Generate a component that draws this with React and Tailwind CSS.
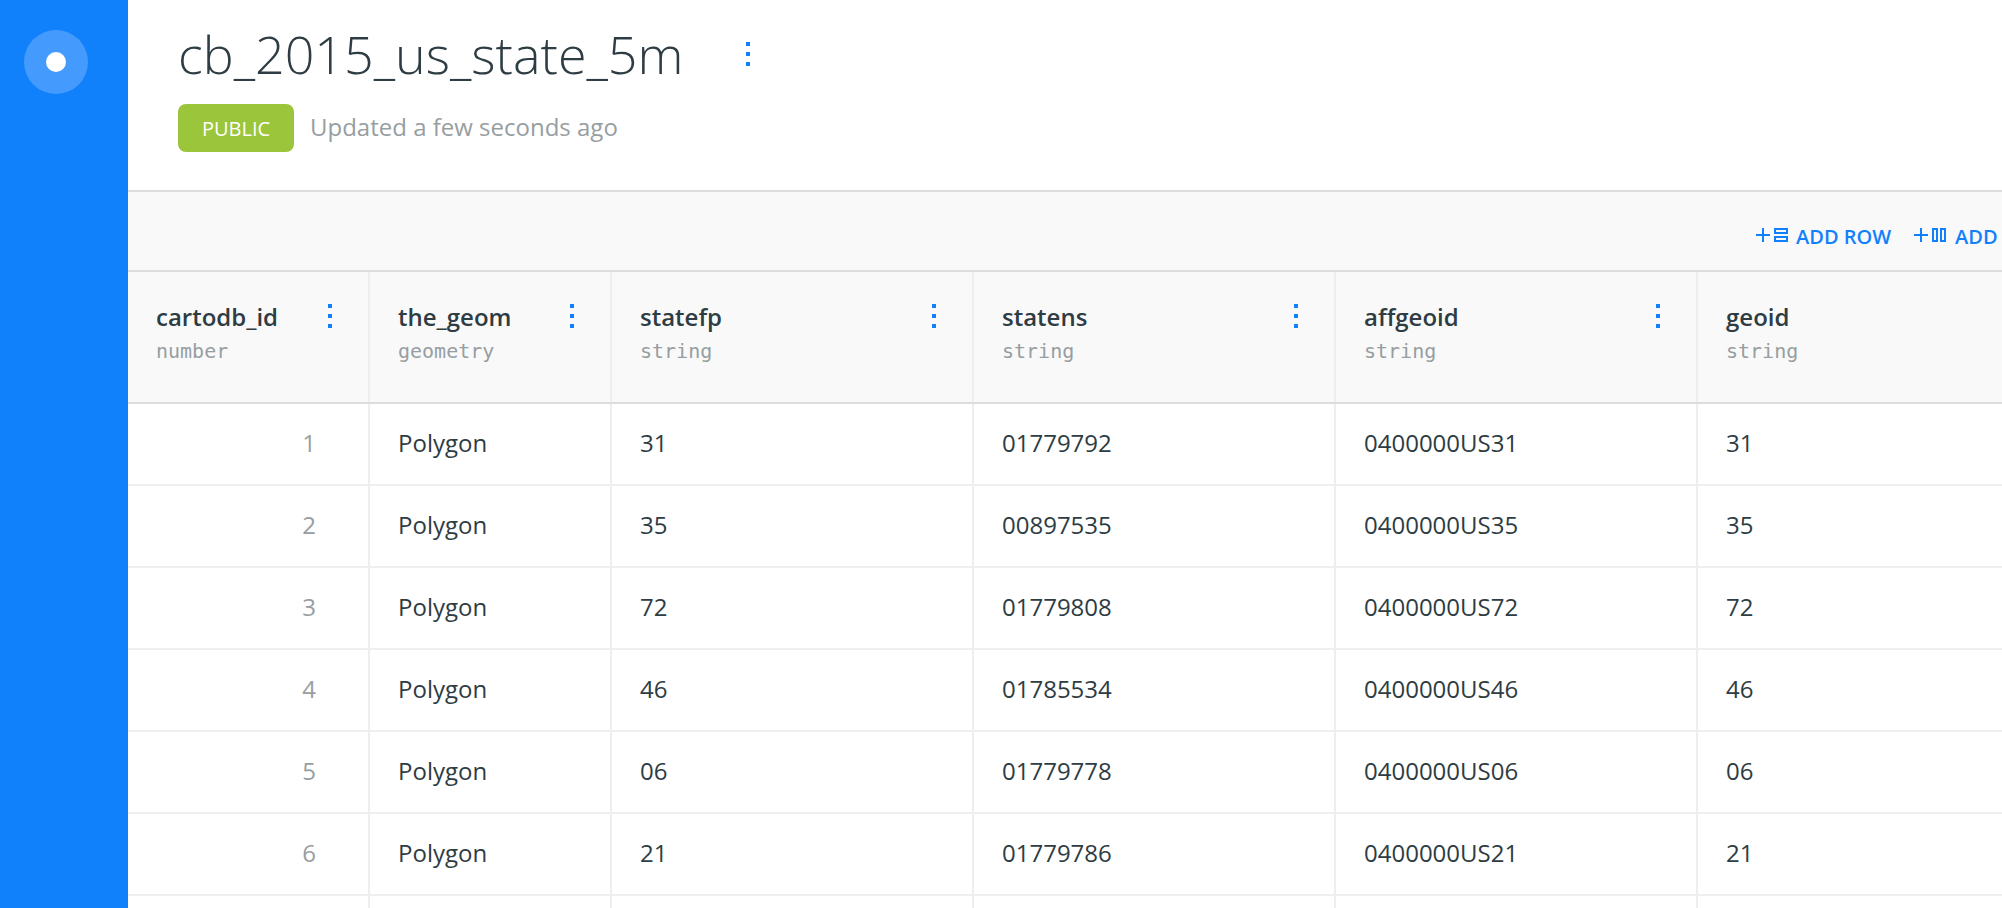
const columns = [
  { name: "cartodb_id", type: "number", menu: true },
  { name: "the_geom", type: "geometry", menu: true },
  { name: "statefp", type: "string", menu: true },
  { name: "statens", type: "string", menu: true },
  { name: "affgeoid", type: "string", menu: true },
  { name: "geoid", type: "string", menu: false },
];

const rows = [
  ["1", "Polygon", "31", "01779792", "0400000US31", "31"],
  ["2", "Polygon", "35", "00897535", "0400000US35", "35"],
  ["3", "Polygon", "72", "01779808", "0400000US72", "72"],
  ["4", "Polygon", "46", "01785534", "0400000US46", "46"],
  ["5", "Polygon", "06", "01779778", "0400000US06", "06"],
  ["6", "Polygon", "21", "01779786", "0400000US21", "21"],
  ["", "", "", "", "", ""],
];

const grid = "grid w-[1932px] shrink-0 grid-cols-[242px_242px_362px_362px_362px_362px]";

function Dots() {
  return (
    <span className="flex flex-col gap-1.5">
      <span className="size-1 bg-[#1181fb]" />
      <span className="size-1 bg-[#1181fb]" />
      <span className="size-1 bg-[#1181fb]" />
    </span>
  );
}

function AddRowIcon() {
  return (
    <svg width="32" height="14" viewBox="0 0 32 14" fill="none" stroke="#1181fb" strokeWidth="2" shapeRendering="crispEdges">
      <path d="M0 7h14M7 0v14M19 1h12v4H19zM19 9h12v4H19z" />
    </svg>
  );
}

function AddColumnIcon() {
  return (
    <svg width="32" height="14" viewBox="0 0 32 14" fill="none" stroke="#1181fb" strokeWidth="2" shapeRendering="crispEdges">
      <path d="M0 7h14M7 0v14M19 1h4v12h-4zM27 1h4v12h-4z" />
    </svg>
  );
}

function Sidebar() {
  return (
    <nav className="w-32 shrink-0 bg-[#1181fb] pl-6 pt-[30px]">
      <div className="flex size-16 items-center justify-center rounded-full bg-[#459bfd]">
        <span className="size-5 rounded-full bg-white" />
      </div>
    </nav>
  );
}

function Header() {
  return (
    <header className="h-[192px] shrink-0 border-b-2 border-[#dddddd] pl-[50px] pt-[18px]">
      <div className="flex h-[72px] items-center">
        <h1 className="w-[568px] whitespace-nowrap text-[52px] font-light leading-[72px]">cb_2015_us_state_5m</h1>
        <Dots />
      </div>
      <div className="mt-3.5 flex items-center gap-4">
        <span className="flex h-12 w-[116px] items-center justify-center rounded-lg bg-[#9bc63b] pt-0.5 text-xl text-white">PUBLIC</span>
        <span className="pb-0.5 text-2xl text-[#979ea1]">Updated a few seconds ago</span>
      </div>
    </header>
  );
}

function Toolbar() {
  return (
    <div className="flex h-20 w-[1932px] shrink-0 items-start border-b-2 border-[#dddddd] bg-[#f9f9f9] pl-[1628px] pt-[31px] text-xl font-semibold text-[#1181fb]">
      <button className="flex w-[158px] gap-2 whitespace-nowrap leading-7">
        <span className="pt-[5px]"><AddRowIcon /></span>
        ADD ROW
      </button>
      <button className="flex gap-[9px] whitespace-nowrap leading-7">
        <span className="pt-[5px]"><AddColumnIcon /></span>
        ADD
      </button>
    </div>
  );
}

function ColumnHeader({ name, type, menu }) {
  return (
    <div className="flex h-[130px] justify-between border-r-2 border-[#eeeeee] pl-7 pr-9 pt-[29px]">
      <div>
        <div className="text-2xl font-semibold leading-8">{name}</div>
        <div className="mt-0.5 font-['DejaVu_Sans_Mono',monospace] text-xl leading-8 text-[#979ea1]">{type}</div>
      </div>
      {menu && <div className="pt-[3px]"><Dots /></div>}
    </div>
  );
}

export default function App() {
  return (
    <div className="flex h-[908px] w-[2002px] overflow-hidden bg-white font-['Open_Sans',sans-serif] text-[#2e3c43]">
      <Sidebar />
      <main className="flex min-w-0 flex-1 flex-col overflow-hidden">
        <Header />
        <Toolbar />
        <div className={grid + " border-b-2 border-[#dddddd] bg-[#f9f9f9]"}>
          {columns.map((c) => <ColumnHeader key={c.name} {...c} />)}
        </div>
        {rows.map((row, r) => (
          <div key={r} className={grid}>
            {row.map((value, i) => (
              <div
                key={i}
                className={
                  "h-[82px] border-b-2 border-r-2 border-[#eeeeee] text-2xl leading-[78px] " +
                  (i === 0 ? "pr-[52px] text-right text-[#979ea1]" : "pl-7")
                }
              >
                {value}
              </div>
            ))}
          </div>
        ))}
      </main>
    </div>
  );
}
